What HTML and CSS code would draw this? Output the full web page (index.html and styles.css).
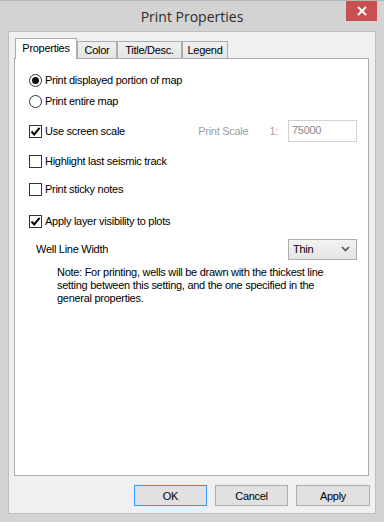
FILE: index.html
```html
<!DOCTYPE html>
<html lang="en">
<head>
    <meta charset="UTF-8">
    <meta name="viewport" content="width=device-width, initial-scale=1.0">
    <title>Print Properties</title>
    <link rel="stylesheet" href="styles.css">
</head>
<body>
    <div class="window">
        <div class="titlebar">
            <span class="title">Print Properties</span>
            <button class="close" title="Close">
                <svg width="10" height="10" viewBox="0 0 10 10"><path d="M1 1L9 9M9 1L1 9" stroke="#fff" stroke-width="2"/></svg>
            </button>
        </div>
        <div class="client">
            <div class="tabs">
                <div class="tab active tab-props">Properties</div>
                <div class="tab tab-color">Color</div>
                <div class="tab tab-title">Title/Desc.</div>
                <div class="tab tab-legend">Legend</div>
            </div>
            <div class="panel">
                <label class="row row-first">
                    <span class="radio checked"></span>
                    <span class="label">Print displayed portion of map</span>
                </label>
                <label class="row row-tight">
                    <span class="radio"></span>
                    <span class="label">Print entire map</span>
                </label>
                <div class="row row-scale">
                    <label class="check-item">
                        <span class="checkbox checked">
                            <svg width="11" height="11" viewBox="0 0 11 11"><path d="M1.5 5.5L4.2 8.4L9.6 1.8" fill="none" stroke="#000" stroke-width="2"/></svg>
                        </span>
                        <span class="label">Use screen scale</span>
                    </label>
                    <div class="scale">
                        <span class="muted">Print Scale</span>
                        <span class="muted ratio">1:</span>
                        <span class="input">75000</span>
                    </div>
                </div>
                <label class="row">
                    <span class="checkbox"></span>
                    <span class="label">Highlight last seismic track</span>
                </label>
                <label class="row row-sticky">
                    <span class="checkbox"></span>
                    <span class="label">Print sticky notes</span>
                </label>
                <label class="row row-layer">
                    <span class="checkbox checked">
                        <svg width="11" height="11" viewBox="0 0 11 11"><path d="M1.5 5.5L4.2 8.4L9.6 1.8" fill="none" stroke="#000" stroke-width="2"/></svg>
                    </span>
                    <span class="label">Apply layer visibility to plots</span>
                </label>
                <div class="row row-well">
                    <span class="label">Well Line Width</span>
                    <div class="combo">
                        <span>Thin</span>
                        <svg width="9" height="6" viewBox="0 0 9 6"><path d="M1 1L4.5 4.5L8 1" fill="none" stroke="#555" stroke-width="1.6"/></svg>
                    </div>
                </div>
                <p class="note">Note: For printing, wells will be drawn with the thickest line setting between this setting, and the one specified in the general properties.</p>
            </div>
            <div class="actions">
                <button class="btn default">OK</button>
                <button class="btn">Cancel</button>
                <button class="btn btn-apply">Apply</button>
            </div>
        </div>
    </div>
</body>
</html>
```
FILE: styles.css
```css
body {
    margin: 0;
    background: #d3d3d3;
    font-family: 'Liberation Sans', Arial, sans-serif;
    font-size: 11px;
    letter-spacing: -0.28px;
    color: #000;
}
.window {
    position: relative;
    width: 384px;
    height: 522px;
    box-sizing: border-box;
    background: #d3d3d3;
    border-top: 1px solid #b8b8b8;
}
.titlebar {
    height: 30px;
    display: flex;
    justify-content: center;
    align-items: center;
}
.title {
    font-family: 'Open Sans', 'Noto Sans', sans-serif;
    font-size: 14px;
    letter-spacing: 0;
    color: #2b2b2b;
    margin-top: 1px;
}
.close {
    position: absolute;
    top: 0;
    left: 346px;
    width: 31px;
    height: 20px;
    border: none;
    padding: 0;
    background: #c75050;
    display: flex;
    align-items: center;
    justify-content: center;
}
.client {
    margin-left: 8px;
    width: 368px;
    height: 483px;
    box-sizing: border-box;
    background: #f0f0f0;
    border: 1px solid #c0c0c0;
    padding: 6px 5px 0 5px;
}
.tabs {
    display: flex;
    align-items: flex-end;
    height: 20px;
    padding-left: 1px;
    position: relative;
    z-index: 1;
}
.tab {
    box-sizing: border-box;
    height: 17px;
    border: 1px solid #acacac;
    border-bottom: none;
    background: linear-gradient(#f0f0f0, #e5e5e5);
    text-align: center;
    line-height: 16px;
}
.tab.active {
    height: 21px;
    margin-bottom: -1px;
    background: #fff;
    line-height: 18px;
}
.tab-props { width: 62px; }
.tab-color { width: 40px; }
.tab-title { width: 65px; }
.tab-legend { width: 46px; }
.panel {
    box-sizing: border-box;
    width: 355px;
    height: 418px;
    background: #fff;
    border: 1px solid #acacac;
    padding: 11px 11px 0 14px;
    display: flex;
    flex-direction: column;
}
.row {
    display: flex;
    align-items: center;
    height: 20px;
    margin-top: 9px;
}
.row-first { margin-top: 0; }
.row-tight { margin-top: 1px; }
.row-scale {
    height: 22px;
    justify-content: space-between;
}
.row-sticky { margin-top: 8px; }
.row-layer { margin-top: 12px; }
.row-well {
    margin-top: 8px;
    justify-content: space-between;
    padding-left: 7px;
}
.check-item {
    display: flex;
    align-items: center;
}
.label {
    margin-left: 3px;
}
.row-well .label { margin-left: 0; }
.radio {
    width: 13px;
    height: 13px;
    box-sizing: border-box;
    border: 1px solid #333;
    border-radius: 50%;
    background: #fff;
    display: flex;
    align-items: center;
    justify-content: center;
    flex: none;
}
.radio.checked::after {
    content: '';
    width: 7px;
    height: 7px;
    border-radius: 50%;
    background: #111;
}
.checkbox {
    width: 13px;
    height: 13px;
    box-sizing: border-box;
    border: 1px solid #333;
    background: #fff;
    display: flex;
    align-items: center;
    justify-content: center;
    flex: none;
}
.scale {
    display: flex;
    align-items: center;
}
.muted { color: #a0a0a0; }
.ratio { margin-left: 21px; }
.input {
    box-sizing: border-box;
    width: 69px;
    height: 22px;
    margin-left: 10px;
    border: 1px solid #d2d2d2;
    color: #8a8a8a;
    padding: 3px 0 0 3px;
}
.combo {
    box-sizing: border-box;
    width: 69px;
    height: 21px;
    border: 1px solid #acacac;
    background: linear-gradient(#f2f2f2, #e5e5e5);
    display: flex;
    align-items: center;
    justify-content: space-between;
    padding: 0 6px 0 4px;
}
.note {
    margin: 7px 0 0 28px;
    width: 285px;
    line-height: 13px;
}
.actions {
    display: flex;
    justify-content: flex-end;
    gap: 8px;
    margin-top: 9px;
    padding-right: 0;
}
.btn {
    width: 73px;
    height: 21px;
    box-sizing: border-box;
    border: 1px solid #adadad;
    background: #e1e1e1;
    font-family: 'Liberation Sans', Arial, sans-serif;
    font-size: 11px;
    letter-spacing: -0.28px;
    color: #000;
    padding: 0;
}
.btn.default { border-color: #3399ff; }
.btn-apply { width: 74px; }
```
